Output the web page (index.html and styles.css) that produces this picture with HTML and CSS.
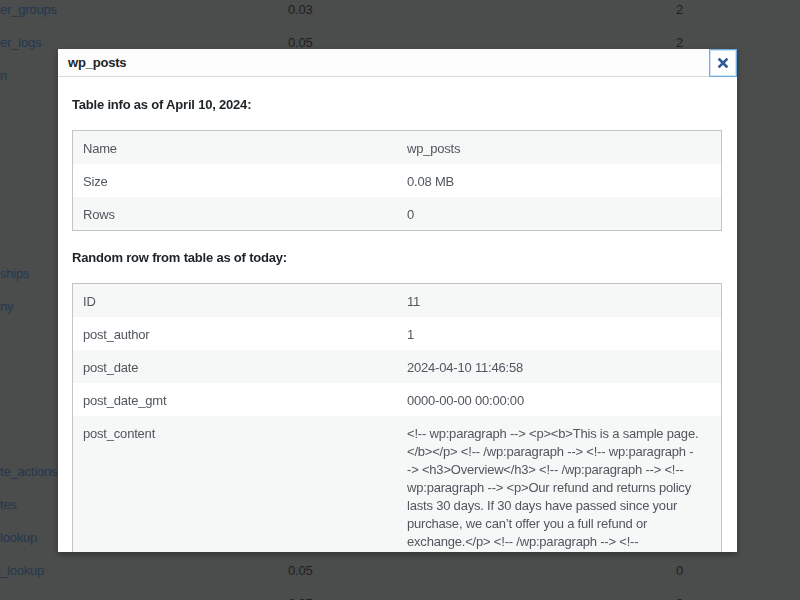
FILE: index.html
```html
<!DOCTYPE html>
<html lang="en">
<head>
<meta charset="utf-8">
<title>wp_posts</title>
<link rel="stylesheet" href="styles.css">
</head>
<body>
<div class="page">
  <div class="bg-row"><span class="bg-name">er_groups</span><span class="bg-num">0.03</span><span class="bg-num">2</span></div>
  <div class="bg-row"><span class="bg-name">er_logs</span><span class="bg-num">0.05</span><span class="bg-num">2</span></div>
  <div class="bg-row"><span class="bg-name">n</span></div>
  <div class="bg-row"></div>
  <div class="bg-row"></div>
  <div class="bg-row"></div>
  <div class="bg-row"></div>
  <div class="bg-row"></div>
  <div class="bg-row"><span class="bg-name">ships</span></div>
  <div class="bg-row"><span class="bg-name">ny</span></div>
  <div class="bg-row"></div>
  <div class="bg-row"></div>
  <div class="bg-row"></div>
  <div class="bg-row"></div>
  <div class="bg-row"><span class="bg-name">te_actions</span></div>
  <div class="bg-row"><span class="bg-name">tes</span></div>
  <div class="bg-row"><span class="bg-name">lookup</span></div>
  <div class="bg-row"><span class="bg-name">_lookup</span><span class="bg-num">0.05</span><span class="bg-num">0</span></div>
  <div class="bg-row"><span class="bg-name">a</span><span class="bg-num">0.05</span><span class="bg-num">0</span></div>
</div>

<div class="modal">
  <div class="modal-header">
    <span class="modal-title">wp_posts</span>
    <button class="modal-close" type="button" aria-label="Close">
      <svg width="12" height="12" viewBox="0 0 12 12" aria-hidden="true"><path d="M2.5 2.5 L9.5 9.5 M9.5 2.5 L2.5 9.5" stroke="currentColor" stroke-width="2.6" stroke-linecap="square" fill="none"/></svg>
    </button>
  </div>
  <div class="modal-body">
    <h3 class="section-title">Table info as of April 10, 2024:</h3>
    <table class="info-table">
      <tr><td>Name</td><td>wp_posts</td></tr>
      <tr><td>Size</td><td>0.08 MB</td></tr>
      <tr><td>Rows</td><td>0</td></tr>
    </table>
    <h3 class="section-title">Random row from table as of today:</h3>
    <table class="info-table">
      <tr><td>ID</td><td>11</td></tr>
      <tr><td>post_author</td><td>1</td></tr>
      <tr><td>post_date</td><td>2024-04-10 11:46:58</td></tr>
      <tr><td>post_date_gmt</td><td>0000-00-00 00:00:00</td></tr>
      <tr><td>post_content</td><td class="content">&lt;!-- wp:paragraph --&gt; &lt;p&gt;&lt;b&gt;This is a sample page.<br>&lt;/b&gt;&lt;/p&gt; &lt;!-- /wp:paragraph --&gt; &lt;!-- wp:paragraph -<br>-&gt; &lt;h3&gt;Overview&lt;/h3&gt; &lt;!-- /wp:paragraph --&gt; &lt;!--<br>wp:paragraph --&gt; &lt;p&gt;Our refund and returns policy<br>lasts 30 days. If 30 days have passed since your<br>purchase, we can’t offer you a full refund or<br>exchange.&lt;/p&gt; &lt;!-- /wp:paragraph --&gt; &lt;!--</td></tr>
    </table>
  </div>
</div>
</body>
</html>
```
FILE: styles.css
```css
html, body {
  margin: 0;
  padding: 0;
  height: 100%;
  overflow: hidden;
}

body {
  background: #4b4c4c;
  font-family: "Liberation Sans", Arial, sans-serif;
  font-size: 13px;
  letter-spacing: -0.2px;
}

.page {
  margin-top: -7px;
}

.bg-row {
  display: grid;
  grid-template-columns: 288px 388px 1fr;
  height: 33px;
  align-items: center;
  line-height: 18px;
}

.bg-name {
  color: #24384f;
}

.bg-num {
  color: #1e1f1f;
}

.modal {
  position: fixed;
  left: 58px;
  top: 49px;
  width: 679px;
  height: 503px;
  background: #fff;
  box-shadow: 0 3px 6px rgba(0, 0, 0, 0.3);
  display: flex;
  flex-direction: column;
  overflow: hidden;
}

.modal-header {
  position: relative;
  box-sizing: border-box;
  height: 28px;
  flex: none;
  background: #fcfcfc;
  border-bottom: 1px solid #dcdcde;
  display: flex;
  align-items: center;
  padding: 1px 0 0 10px;
}

.modal-title {
  font-weight: 700;
  color: #1d2327;
  line-height: 18px;
}

.modal-close {
  position: absolute;
  top: 0;
  right: 0;
  box-sizing: border-box;
  width: 28px;
  height: 28px;
  margin: 0;
  padding: 0;
  border: 1px solid #72aee6;
  box-shadow: inset 0 0 0 1px rgba(114, 174, 230, 0.35);
  background: #fff;
  color: #2c5c91;
  display: flex;
  align-items: center;
  justify-content: center;
}

.modal-body {
  flex: 1;
  overflow: hidden;
  padding: 19px 15px 0 14px;
}

.section-title {
  margin: 0 0 16px;
  font-size: 13px;
  font-weight: 700;
  line-height: 18px;
  color: #1d2327;
}

.info-table {
  width: 100%;
  table-layout: fixed;
  border-collapse: collapse;
  border: 1px solid #c3c4c7;
  margin-bottom: 18px;
  color: #50575e;
}

.info-table td {
  width: 50%;
  padding: 9px 10px 6px;
  line-height: 18px;
  vertical-align: top;
}

.info-table tr:nth-child(odd) {
  background: #f6f7f7;
}

.info-table tr:nth-child(even) {
  background: #fff;
}

.info-table td.content {
  white-space: nowrap;
  overflow: hidden;
}
```
